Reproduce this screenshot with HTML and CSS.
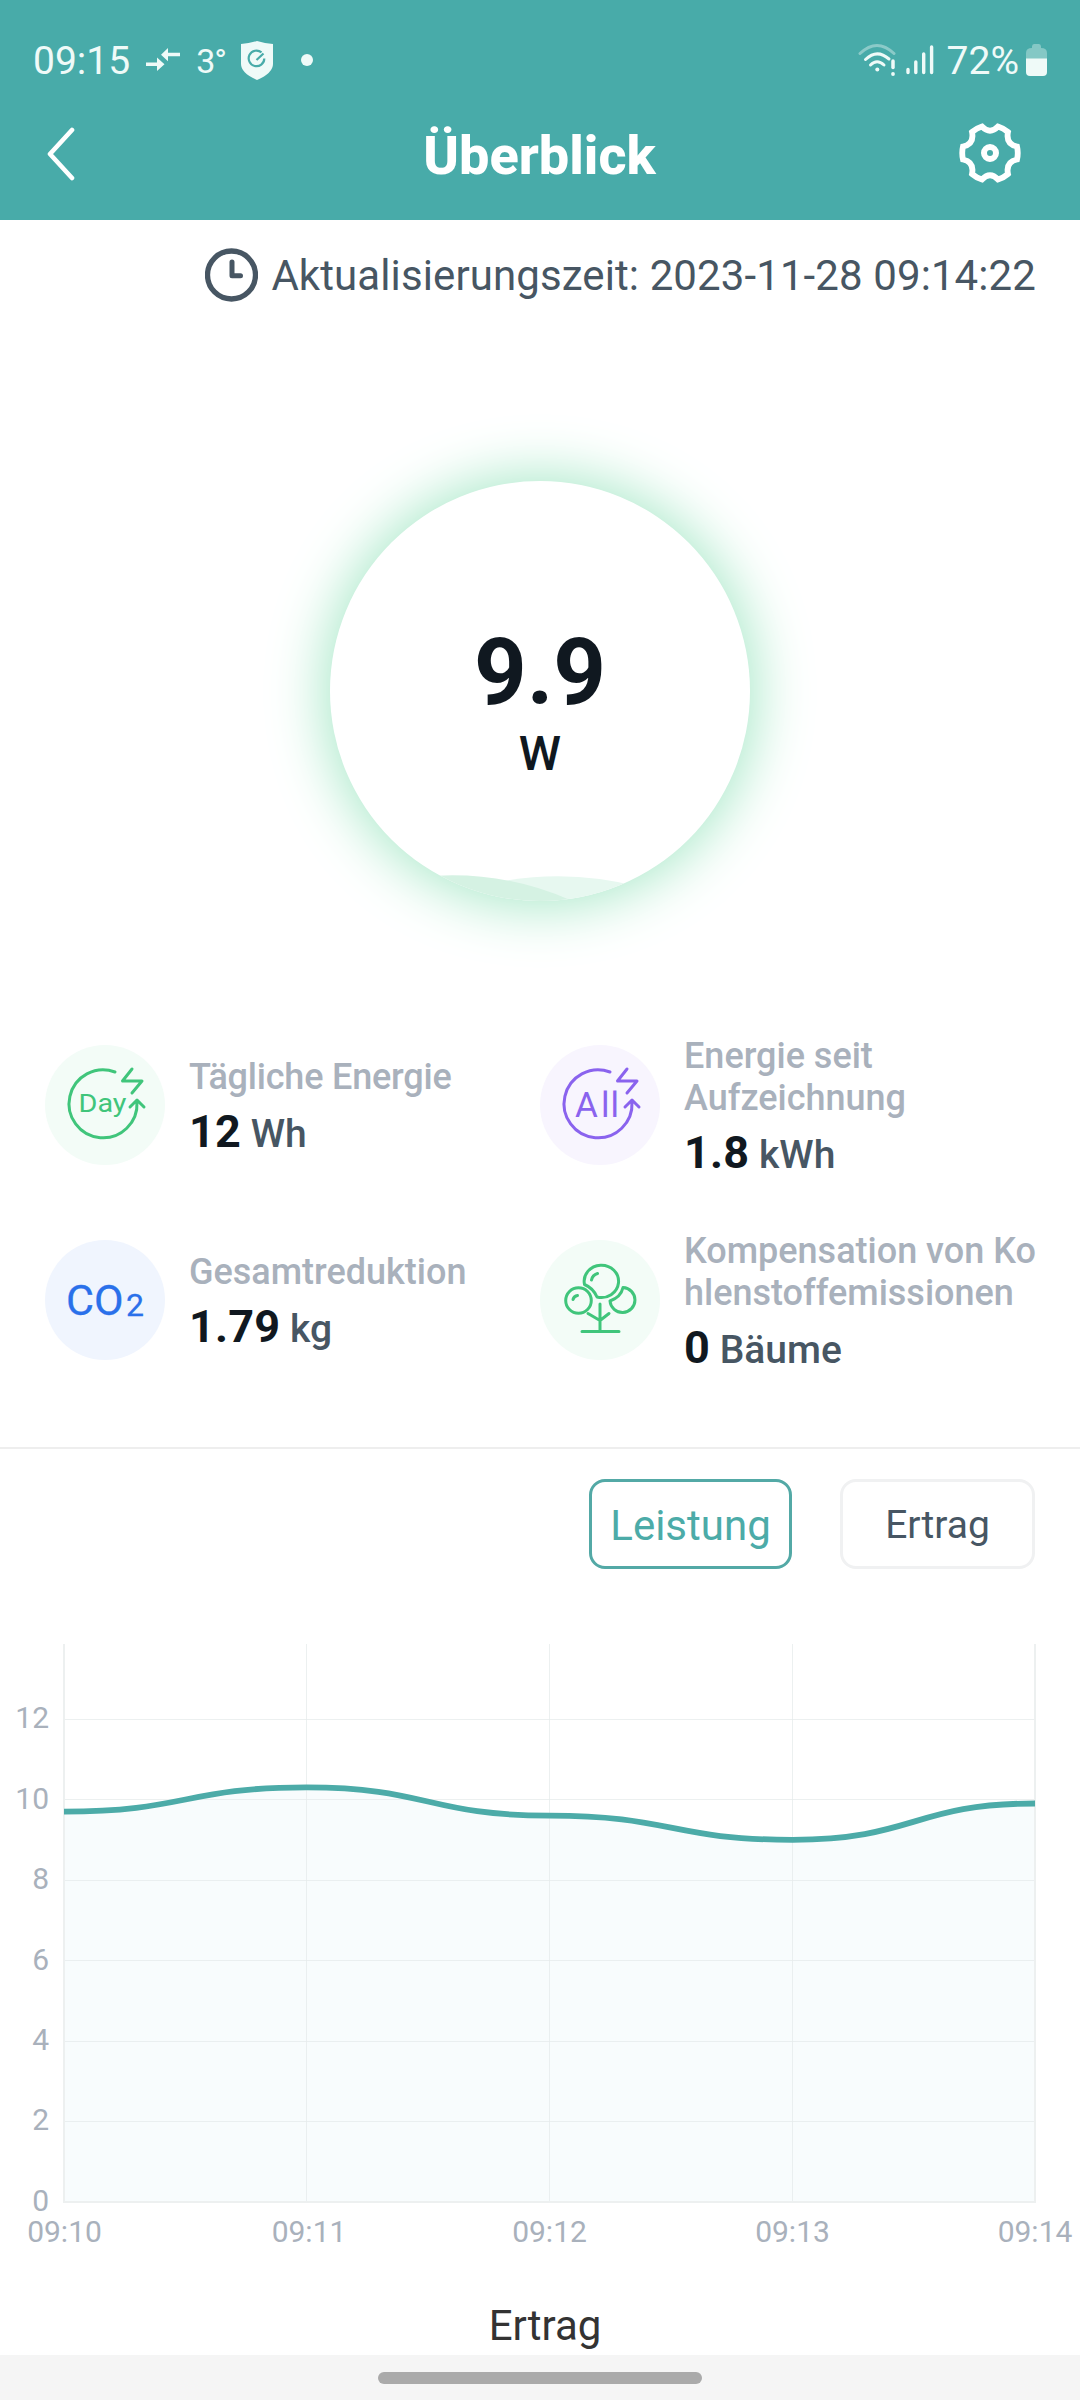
FILE: index.html
```html
<!DOCTYPE html>
<html lang="de">
<head>
<meta charset="utf-8">
<title>Überblick</title>
<link rel="stylesheet" href="styles.css">
</head>
<body>
<header class="top">
  <div class="status">
    <span class="clock">09:15</span>
    <svg class="i-arrows" width="34" height="24" viewBox="0 0 34 24"><g fill="#effaf8"><path d="M0 14.500h11v-5l7.500 6.800-7.500 6.700v-5H0z"/><path d="M34 8.200H22v5l-7-6.500L22 0v4.800h12z"/></g></svg>
    <span class="temp">3°</span>
    <svg class="i-shield" width="32" height="40" viewBox="0 0 32 40"><path d="M0 4Q8 3.500 16 1q8 2.500 16 3v20q0 9-16 16Q0 33 0 24z" fill="#effaf8"/><path d="M20.500 12.400A7.800 7.800 0 1 0 23.300 18.500M15.500 20l7-6.500" fill="none" stroke="#48aba9" stroke-width="2.200"/></svg>
    <span class="dot"></span>
    <svg class="i-wifi" width="38" height="34" viewBox="0 0 38 34" fill="none" stroke="#effaf8" stroke-width="3" stroke-linecap="round"><path d="M2 10.500Q19-5.500 36 10.500" opacity=".4"/><path d="M7.500 16.500Q19 5.500 31 16M12.500 22Q19 15.500 26 22"/><circle cx="19.300" cy="26.500" r="2" fill="#effaf8" stroke="none"/><path d="M35 18v6.500" stroke-width="3.500"/><circle cx="35" cy="31" r="1.900" fill="#effaf8" stroke="none"/></svg>
    <svg class="i-signal" width="28" height="30" viewBox="0 0 28 30" stroke="#effaf8" stroke-width="3.400" stroke-linecap="round"><path d="M2 24.500v3M9.800 17v10.500M17.700 9v18.500M25.600 2v25.500"/></svg>
    <span class="pct">72%</span>
    <svg class="i-batt" width="21" height="33" viewBox="0 0 21 33"><path d="M6 2.500Q6 0 8 0h5q2 0 2 2.500V4q6 0 6 5v6H0V9q0-5 6-5z" fill="#84c8c5"/><path d="M0 14.500h21V28q0 4-4 4H4q-4 0-4-4z" fill="#effaf8"/></svg>
  </div>
  <div class="nav">
    <svg class="i-back" width="30" height="54" viewBox="0 0 30 54"><path d="M26 3 4 27l22 24" fill="none" stroke="#fff" stroke-width="4.600" stroke-linecap="round" stroke-linejoin="round"/></svg>
    <h1>Überblick</h1>
    <svg class="i-gear" width="64" height="64" viewBox="-32 -31 64 64" fill="none" stroke="#fff" stroke-width="5.800"><path d="M-8-26.500Q0-18 8-26.500A28 28 0 0 1 18-21Q15.500-9 27-6.500A28 28 0 0 1 27 6.500Q15.500 9 18 21A28 28 0 0 1 8 26.500Q0 18-8 26.500A28 28 0 0 1-18 21Q-15.500 9-27 6.500A28 28 0 0 1-27-6.500Q-15.500-9-18-21A28 28 0 0 1-8-26.500Z"/><circle r="6" stroke-width="6"/></svg>
  </div>
</header>

<div class="update">
  <svg width="53" height="54" viewBox="0 0 53 54" fill="none" stroke="#475663" stroke-width="5.300" stroke-linecap="round" stroke-linejoin="round"><circle cx="26.500" cy="27" r="24"/><path d="M27 14v13.700h8.500" stroke-width="5"/></svg>
  <span>Aktualisierungszeit: 2023-11-28 09:14:22</span>
</div>

<section class="gauge">
  <div class="disc">
    <svg class="wave" width="420" height="420" viewBox="0 0 420 420"><path d="M150 405Q230 385 310 406V420H150z" fill="#e7f8f0"/><path d="M90 396Q170 388 240 419L250 421H90z" fill="#d5f2e3"/></svg>
    <strong>9.9</strong>
    <span>W</span>
  </div>
</section>

<section class="stats">
  <div class="stat">
    <svg width="120" height="120" viewBox="0 0 120 120"><circle cx="60" cy="60" r="60" fill="#f3fcf7"/><g fill="none" stroke="#40c57b" stroke-width="3" stroke-linecap="round" stroke-linejoin="round"><path d="M70 27A34 34 0 1 0 92 57M85 62l7-7 7 7M87 24 77.500 36H97L87 48"/></g><text x="33.500" y="66.800" font-size="26.500" textLength="48" lengthAdjust="spacingAndGlyphs" fill="#40c57b" class="glyph">Day</text></svg>
    <div><p class="tight">Tägliche Energie</p><div class="val"><b>12</b> Wh</div></div>
  </div>
  <div class="stat">
    <svg width="120" height="120" viewBox="0 0 120 120"><circle cx="60" cy="60" r="60" fill="#f8f5fe"/><g fill="none" stroke="#8a63ee" stroke-width="3" stroke-linecap="round" stroke-linejoin="round"><path d="M70 27A34 34 0 1 0 92 57M85 62l7-7 7 7M87 24 77.500 36H97L87 48"/></g><text x="35 61 70.500" y="71.500" font-size="35" fill="#8a63ee" class="glyph">All</text></svg>
    <div><p>Energie seit<br>Aufzeichnung</p><div class="val"><b>1.8</b> kWh</div></div>
  </div>
  <div class="stat">
    <svg width="120" height="120" viewBox="0 0 120 120"><circle cx="60" cy="60" r="60" fill="#f0f5fe"/><g fill="#2a70ea" stroke="#2a70ea" stroke-width=".3" class="glyph"><text x="21" y="75" font-size="42" textLength="57.500" lengthAdjust="spacingAndGlyphs">CO</text><text x="81" y="75.500" font-size="32">2</text></g></svg>
    <div><p>Gesamtreduktion</p><div class="val"><b>1.79</b> kg</div></div>
  </div>
  <div class="stat">
    <svg width="120" height="120" viewBox="0 0 120 120"><circle cx="60" cy="60" r="60" fill="#f3fcf7"/><g fill="none" stroke="#40c57b" stroke-width="3" stroke-linecap="round" stroke-linejoin="round"><path d="M44.500 44.500A17.200 16.200 0 1 1 57 57Q53 48 44.500 44.500ZM51.500 40q1-5 6-6.500"/><circle cx="38.500" cy="60.500" r="12.800"/><path d="M33 59.500q1-3.500 4.500-4M83 47.500A12.500 12.500 0 1 1 70 61Q81 57 83 47.500ZM60 64v27M48 73.500l12 7 9-7M42 91.500h37"/></g></svg>
    <div><p>Kompensation von Ko<br>hlenstoffemissionen</p><div class="val"><b>0</b> Bäume</div></div>
  </div>
</section>

<div class="tabs">
  <button class="tab on">Leistung</button>
  <button class="tab">Ertrag</button>
</div>

<svg class="chart" width="1080" height="640" viewBox="0 1630 1080 640">
  <path d="M64 1811.600C185.500 1811.600 185.500 1787.400 306.500 1787.400S428 1815.600 549.500 1815.600 671 1839.800 792.500 1839.800 914 1803.500 1035 1803.500V2202H64z" fill="#f8fcfd"/>
  <path d="M64 1719.500h971M64 1799.500h971M64 1880.500h971M64 1960.500h971M64 2041.500h971M64 2121.500h971M306.500 1644v558M549.500 1644v558M792.500 1644v558" stroke="#e6ebeb" stroke-opacity=".75"/>
  <path d="M64 1644v558h971v-558" fill="none" stroke="#edf0f0" stroke-width="2"/>
  <path d="M64 1811.600C185.500 1811.600 185.500 1787.400 306.500 1787.400S428 1815.600 549.500 1815.600 671 1839.800 792.500 1839.800 914 1803.500 1035 1803.500" fill="none" stroke="#4caba8" stroke-width="5.800"/>
  <g text-anchor="end"><text x="49" y="1728">12</text><text x="49" y="1809">10</text><text x="49" y="1889">8</text><text x="49" y="1970">6</text><text x="49" y="2050">4</text><text x="49" y="2130">2</text><text x="49" y="2211">0</text></g>
  <g text-anchor="middle"><text x="64.500" y="2242">09:10</text><text x="309" y="2242">09:11</text><text x="549.500" y="2242">09:12</text><text x="792.500" y="2242">09:13</text><text x="1035" y="2242">09:14</text></g>
</svg>

<div class="next">Ertrag</div>
<footer class="homebar"><span></span></footer>
</body>
</html>
```
FILE: styles.css
```css
* { box-sizing: border-box; }
body { margin: 0; width: 1080px; height: 2400px; overflow: hidden; display: flex; flex-direction: column; background: #fff; font-family: Roboto, sans-serif; color: #475663; }
svg { display: block; flex: none; }
p, h1 { margin: 0; }
.top { height: 220px; background: #48aba9; color: #effaf8; flex: none; }
.status { height: 100px; padding: 20px 33px 0; display: flex; align-items: center; }
.clock, .pct { font-size: 39px; line-height: 82px; padding-top: 2px; }
.i-arrows { margin-left: 16px; }
.temp { margin-left: 16px; font-size: 34px; line-height: 80px; padding-top: 2px; width: 31px; letter-spacing: -1px; white-space: nowrap; }
.i-shield { margin-left: 14px; }
.dot { width: 12px; height: 12px; border-radius: 50%; background: #effaf8; margin-left: 28px; margin-right: auto; }
.i-signal { margin-left: 10px; }
.pct { margin-left: 13px; }
.i-batt { margin-left: 7px; }
.nav { height: 110px; display: grid; grid-template: 108px / 64px 1fr 64px; align-items: center; padding: 0 58px 0 46px; }
.nav h1 { font-size: 54px; line-height: 104px; padding: 4px 0 0 11px; font-weight: 800; text-align: center; color: #fff; }
.update { height: 110px; flex: none; display: flex; align-items: center; justify-content: flex-end; padding-right: 44px; gap: 13px; font-size: 42px; letter-spacing: 0.1px; }
.gauge { height: 715px; flex: none; display: flex; justify-content: center; padding-top: 151px; }
.disc { position: relative; width: 420px; height: 420px; border-radius: 50%; background: #fff; box-shadow: 0 0 56px 6px #a8e8c8; display: flex; flex-direction: column; align-items: center; padding-top: 139px; color: #101820; }
.wave { position: absolute; inset: 0; border-radius: 50%; }
.disc strong { font-size: 92px; line-height: 106px; }
.disc span { font-size: 48px; line-height: 56px; font-weight: 500; }
.stats { height: 404px; flex: none; display: grid; grid-template-columns: 495px 495px; grid-template-rows: 120px 120px; row-gap: 75px; padding-left: 45px; border-bottom: 2px solid #eee; }
.stat { display: flex; align-items: center; gap: 24px; white-space: nowrap; font-weight: 500; }
.stat p { font-size: 36px; line-height: 42px; padding-top: 6px; color: #a9b1bc; }
.stat .tight { letter-spacing: -0.2px; }
.val { font-size: 39px; line-height: 52px; margin-top: 8px; }
.val b { font-size: 45px; letter-spacing: 0.2px; color: #101820; font-weight: 700; }
.glyph { font-family: Roboto, sans-serif; font-weight: 400; }
.tabs { height: 181px; flex: none; display: flex; justify-content: flex-end; gap: 48px; padding: 30px 45px 0 0; }
.tab { width: 195px; height: 90px; padding: 3px 0 0; border: 3px solid #f0f1f2; border-radius: 16px; background: #fff; font: 400 39px/81px Roboto, sans-serif; color: #475663; }
.tab.on { width: 203px; border-color: #53a9a6; color: #4caba8; font-size: 42px; }
.chart { font-size: 30px; fill: #a9b1bc; }
.next { height: 85px; flex: none; font-size: 42px; line-height: 112px; text-align: center; padding-left: 10px; color: #333; }
.homebar { height: 45px; flex: none; background: #f5f5f5; display: flex; justify-content: center; padding-top: 17px; }
.homebar span { width: 324px; height: 12px; border-radius: 6px; background: #aaa; }
```
